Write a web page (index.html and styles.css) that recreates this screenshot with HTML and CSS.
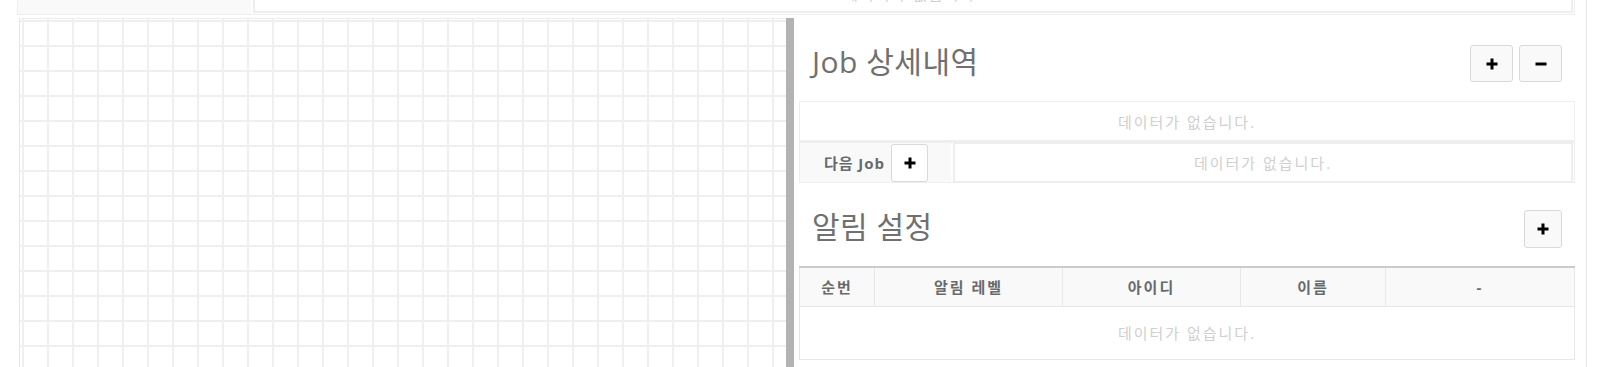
FILE: index.html
```html
<!DOCTYPE html>
<html lang="ko">
<head>
    <meta charset="UTF-8">
    <title>Job 상세내역</title>
    <link rel="stylesheet" href="styles.css">
</head>
<body>
    <div class="page">
        <div class="info-row top-row">
            <div class="info-label"></div>
            <div class="info-value">데이터가 없습니다.</div>
        </div>

        <div class="workspace">
            <div class="canvas-grid"></div>
            <div class="splitter"></div>

            <div class="detail">
                <div class="section-head">
                    <h2>Job 상세내역</h2>
                    <div class="tools">
                        <button type="button" class="btn btn-wide" title="추가">
                            <svg width="12" height="12" viewBox="0 0 12 12"><path d="M6 0.5v11M0.5 6h11" stroke="#000" stroke-width="3"/></svg>
                        </button>
                        <button type="button" class="btn btn-wide" title="삭제">
                            <svg width="12" height="12" viewBox="0 0 12 12"><path d="M0.5 6h11" stroke="#000" stroke-width="3"/></svg>
                        </button>
                    </div>
                </div>

                <div class="detail-box">
                    <div class="empty-row">데이터가 없습니다.</div>
                    <div class="info-row next-row">
                        <div class="info-label">
                            <span>다음 Job</span>
                            <button type="button" class="btn btn-sm" title="다음 Job 추가">
                                <svg width="12" height="12" viewBox="0 0 12 12"><path d="M6 0.5v11M0.5 6h11" stroke="#000" stroke-width="3"/></svg>
                            </button>
                        </div>
                        <div class="info-value">데이터가 없습니다.</div>
                    </div>
                </div>

                <div class="section-head">
                    <h2>알림 설정</h2>
                    <div class="tools">
                        <button type="button" class="btn" title="알림 추가">
                            <svg width="12" height="12" viewBox="0 0 12 12"><path d="M6 0.5v11M0.5 6h11" stroke="#000" stroke-width="3"/></svg>
                        </button>
                    </div>
                </div>

                <table class="alarm-table">
                    <thead>
                        <tr>
                            <th class="col-no">순번</th>
                            <th class="col-level">알림 레벨</th>
                            <th class="col-id">아이디</th>
                            <th class="col-name">이름</th>
                            <th>-</th>
                        </tr>
                    </thead>
                    <tbody>
                        <tr>
                            <td colspan="5" class="no-data">데이터가 없습니다.</td>
                        </tr>
                    </tbody>
                </table>
            </div>
        </div>
    </div>
</body>
</html>
```

FILE: styles.css
```css
* {
    margin: 0;
    padding: 0;
    box-sizing: border-box;
}

html, body {
    height: 100%;
    overflow: hidden;
}

body {
    font-family: "Open Sans", "Noto Sans CJK KR", sans-serif;
    font-size: 14px;
    color: #676a6c;
    background: #fff;
}

/* 화면이 약간 스크롤된 상태 */
.page {
    width: 1587px;
    height: 400px;
    margin-top: -27px;
    padding: 0 11px 0 17px;
    border-right: 1px solid #e7e7e7;
}

.info-row {
    display: flex;
    border: 1px solid #eee;
}

.info-label {
    background: #f9f9f9;
    display: flex;
    align-items: center;
    justify-content: center;
    gap: 6px;
    font-size: 15px;
    font-weight: 700;
    letter-spacing: 1px;
}

.info-value {
    flex: 1;
    border: 2px solid #eee;
    border-top: none;
    margin-left: 2px;
    margin-right: 1px;
    display: flex;
    align-items: center;
    justify-content: center;
    color: #cfcfcf;
    font-size: 15px;
    letter-spacing: 2px;
}

.top-row {
    height: 42px;
}

.top-row .info-label {
    width: 233px;
}

.top-row .info-value {
    margin-bottom: 1px;
    padding-top: 2px;
}

.workspace {
    display: flex;
    margin-top: 3px;
    height: 360px;
}

.canvas-grid {
    width: 767px;
    margin-left: 2px;
    border-top: 1px solid #eee;
    border-left: 1px solid #e6e6e6;
    background-color: #fff;
    background-image:
        linear-gradient(#efefef 2px, transparent 2px),
        linear-gradient(90deg, #efefef 2px, transparent 2px);
    background-size: 25px 25px;
    background-position: 2px 1px;
}

.splitter {
    width: 8px;
    background: #b3b3b3;
}

.detail {
    flex: 1;
    padding-left: 5px;
}

.section-head {
    display: flex;
    justify-content: space-between;
    align-items: flex-start;
    height: 83px;
    padding-top: 27px;
}

.section-head h2 {
    font-size: 30px;
    font-weight: 400;
    line-height: 34px;
    letter-spacing: 0.5px;
    margin-left: 13px;
    color: #707070;
}

.tools {
    display: flex;
    gap: 6px;
    margin-right: 13px;
}

.btn {
    width: 38px;
    height: 38px;
    background: #f9f9f9;
    border: 1px solid #d9d9d9;
    border-radius: 3px;
    display: flex;
    align-items: center;
    justify-content: center;
    cursor: pointer;
}

.btn-wide {
    width: 43px;
    height: 37px;
}

.btn-sm {
    width: 37px;
    height: 38px;
    background: #fff;
}

.detail-box {
    border: 1px solid #eee;
    border-bottom: none;
}

.empty-row {
    height: 41px;
    display: flex;
    align-items: center;
    justify-content: center;
    border-bottom: 3px solid #eee;
    color: #cfcfcf;
    font-size: 15px;
    letter-spacing: 2px;
}

.next-row {
    height: 40px;
    border: none;
    border-bottom: 1px solid #eee;
}

.next-row .info-label {
    width: 151px;
    padding-left: 1px;
}

.next-row .info-value {
    border-top: 1px solid #eee;
    border-bottom: 1px solid #eee;
    margin: 0 1px 0 2px;
}

.alarm-table {
    width: 100%;
    border-collapse: collapse;
    border: 1px solid #e7e7e7;
    border-top: 2px solid #cbcbcb;
}

.alarm-table th {
    height: 39px;
    background: #f9f9f9;
    font-size: 15px;
    font-weight: 700;
    letter-spacing: 2px;
    border-left: 1px solid #e7e7e7;
    border-bottom: 1px solid #e7e7e7;
}

.alarm-table th:first-child {
    border-left: none;
}

.col-no {
    width: 75px;
}

.col-level {
    width: 188px;
}

.col-id {
    width: 178px;
}

.col-name {
    width: 145px;
}

.no-data {
    height: 53px;
    text-align: center;
    color: #cfcfcf;
    font-size: 15px;
    letter-spacing: 2px;
}
```
